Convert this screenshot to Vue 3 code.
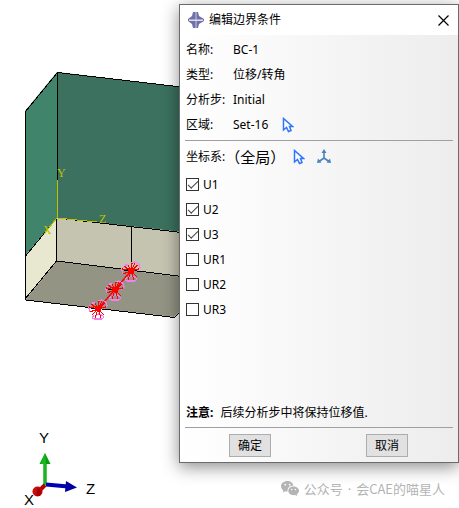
<script setup>
import { reactive } from 'vue'

const fields = [
  { label: '名称:', value: 'BC-1' },
  { label: '类型:', value: '位移/转角' },
  { label: '分析步:', value: 'Initial' },
  { label: '区域:', value: 'Set-16', pick: true },
]

const dofs = reactive([
  { name: 'U1', fixed: true },
  { name: 'U2', fixed: true },
  { name: 'U3', fixed: true },
  { name: 'UR1', fixed: false },
  { name: 'UR2', fixed: false },
  { name: 'UR3', fixed: false },
])

const supports = [
  { x: 131, y: 271 },
  { x: 115, y: 290 },
  { x: 98, y: 309 },
]
</script>

<template>
  <main class="workspace">
    <svg class="viewport" width="459" height="508" viewBox="0 0 459 508" aria-hidden="true">
      <defs>
        <g id="support" fill="none" shape-rendering="crispEdges">
          <path
            d="M-8 -4L-9 -1L-8 3M-6 -6L-3 -6M0 -8L4 -9L8 -7L9 -3L6 0M-4 6L-6 9L-4 10H4L6 8L4 6L1 5L-2 6"
            stroke="#ee82ee"
            stroke-width="1.300"
          />
          <path
            d="M0 0L-9 -2M0 0L-8 3M0 0L-7 -5M0 0L-3 -6M0 0L1 -8M0 0L4 -8M0 0L7 -6M0 0L8 -2M0 0L-6 6M0 0L-3 9M0 0L3 9M0 0L6 6"
            stroke="#ff0000"
            stroke-width="1.200"
          />
          <path d="M-3 -2L0 -3L3 -2V2L0 3L-3 2Z" fill="#ff0000" />
          <path d="M-7 -1H-3" stroke="#000" />
        </g>
      </defs>
      <path d="M25 111L57 72V218L25 256Z" fill="#41846c" />
      <path d="M57 72L190 88V233L57 218Z" fill="#3b715e" />
      <path d="M25 256L57 218V261L25 300Z" fill="#e8e8d1" />
      <path d="M57 218L190 233V278L57 261Z" fill="#c5c4b1" />
      <path d="M57 261L190 278V302L174 317L25 300Z" fill="#949484" />
      <g fill="none" stroke="#000" shape-rendering="crispEdges">
        <path d="M25.500 111.500L57.500 72.500L190 88M25.500 111V300L174.500 317.500L190 302" />
        <path d="M57.500 72V180M57.500 218L190 233.500M25.500 256L57 218M56.500 219V261L190 277.500M56.500 261L25 299M131.500 227V269" />
        <path d="M57.500 180V218L97 222M57 218L44 234" stroke="#c0c000" />
      </g>
      <g class="datum" fill="#c0c000">
        <text x="57" y="177">Y</text>
        <text x="99" y="223">Z</text>
        <text x="43" y="234">X</text>
      </g>
      <path d="M131 271L98 309" stroke="#ff0000" stroke-width="1.500" />
      <use v-for="s in supports" :key="s.x" href="#support" :x="s.x" :y="s.y" />
      <g>
        <path d="M45 485V463" stroke="#18b51c" stroke-width="3.500" />
        <path d="M45 453L50.500 464H39.500Z" fill="#079c0d" />
        <path d="M45 453L46 464H41Z" fill="#19b91d" />
        <path d="M46 484.500L68 486.500" stroke="#0000b5" stroke-width="4" />
        <path d="M66 481L77 487.500L65 492Z" fill="#0000a0" />
        <path d="M45 485L40 490" stroke="#b00000" stroke-width="4" />
        <circle cx="37.500" cy="491.500" r="5" fill="#c80c0c" />
        <path d="M38 487L42 491L40 496L36 496Z" fill="#a80000" />
      </g>
      <g class="triad">
        <text x="39" y="443">Y</text>
        <text x="86" y="494">Z</text>
        <text x="24" y="505">X</text>
      </g>
    </svg>

    <section class="dialog" role="dialog" aria-labelledby="dialog-title">
      <header class="titlebar">
        <svg width="16" height="16" viewBox="0 0 16 16" aria-hidden="true">
          <path d="M5 0H10L11 4L16 7V9L11 12L10 16H5L4 12L0 9V7L4 4Z" fill="#7071a6" />
          <path d="M7 0H9V16H7Z" fill="#9a9bc9" />
          <path d="M1 7.500H15V9H1Z" fill="#dedfef" />
        </svg>
        <h1 id="dialog-title">编辑边界条件</h1>
        <button class="close" type="button" aria-label="关闭">
          <svg width="11" height="11" viewBox="0 0 11 11">
            <path d="M.5 .5L10.500 10.500M10.500 .5L.5 10.500" stroke="#000" stroke-width="1.200" />
          </svg>
        </button>
      </header>

      <div class="content">
        <dl class="fields">
          <div v-for="f in fields" :key="f.label" class="row">
            <dt>{{ f.label }}</dt>
            <dd>{{ f.value }}</dd>
            <button v-if="f.pick" class="tool" type="button" aria-label="编辑区域">
              <svg width="12" height="16" viewBox="0 0 12 16">
                <path d="M1.500 1.500V13L4.500 10.500L6.500 14.500L9 13.500L7.500 9.500H10.500Z" fill="#fff" stroke="#2f74ff" stroke-width="1.500" />
              </svg>
            </button>
          </div>
        </dl>

        <div class="row csys">
          <span>坐标系:</span>
          <span class="global">（全局）</span>
          <button class="tool" type="button" aria-label="选择坐标系">
            <svg width="12" height="16" viewBox="0 0 12 16">
              <path d="M1.500 1.500V13L4.500 10.500L6.500 14.500L9 13.500L7.500 9.500H10.500Z" fill="#fff" stroke="#2f74ff" stroke-width="1.500" />
            </svg>
          </button>
          <button class="tool" type="button" aria-label="创建基准坐标系">
            <svg width="14" height="15" viewBox="0 0 14 15">
              <path d="M7 9V2M7 9L2 12.500M7 9L12 12.500" fill="none" stroke="#4a83b8" stroke-width="1.600" />
              <path d="M7 0L9.500 4H4.500ZM0 14L1 9.500L4.500 13.500ZM14 14L13 9.500L9.500 13.500Z" fill="#4a83b8" />
            </svg>
          </button>
        </div>

        <label v-for="dof in dofs" :key="dof.name" class="row dof">
          <input v-model="dof.fixed" type="checkbox" />
          {{ dof.name }}
        </label>

        <p class="note"><strong>注意:</strong> 后续分析步中将保持位移值.</p>

        <footer class="actions">
          <button type="button">确定</button>
          <button type="button">取消</button>
        </footer>
      </div>
    </section>

    <p class="watermark">
      <svg width="18" height="16" viewBox="0 0 18 16" aria-hidden="true">
        <path d="M6.500 0C2.900 0 0 2.300 0 5.300C0 7 .9 8.500 2.300 9.400L1.700 11.500L4.200 10.300C5 10.500 5.800 10.600 6.700 10.600C5.900 7.300 8.500 4.600 12.500 4.500C12 1.900 9.500 0 6.500 0Z" fill="#b4b4b4" />
        <path d="M12.500 5.500C9.500 5.500 7.300 7.400 7.300 9.800C7.300 12.300 9.600 14.200 12.500 14.200L14.300 13.900L16.300 15L15.800 13.200C17.100 12.400 18 11.200 18 9.800C18 7.400 15.500 5.500 12.500 5.500Z" fill="#b4b4b4" />
        <g fill="#fff">
          <circle cx="4.300" cy="3.700" r=".9" />
          <circle cx="8.700" cy="3.700" r=".9" />
          <circle cx="10.800" cy="8.500" r=".8" />
          <circle cx="14.400" cy="8.500" r=".8" />
        </g>
      </svg>
      <span>公众号</span>
      <span class="dot">·</span>
      <span>会CAE的喵星人</span>
    </p>
  </main>
</template>

<style>
body {
  margin: 0;
  background: #fff;
}
</style>

<style scoped>
.workspace {
  position: relative;
  min-height: 100vh;
  box-sizing: border-box;
  padding: 4px 0 0 179px;
  overflow: hidden;
  color: #000;
  font: 12px/16px 'Noto Sans', 'Noto Sans CJK SC', sans-serif;
}

.viewport {
  position: absolute;
  top: 0;
  left: 0;
}

.datum {
  font: 12px 'Liberation Serif', serif;
}

.triad {
  font: 15px 'Liberation Sans', sans-serif;
}

.dialog {
  position: relative;
  border: 1px solid #6b6b6b;
  box-shadow: 0 4px 16px rgba(0, 0, 0, 0.45);
}

.titlebar {
  display: flex;
  align-items: center;
  height: 30px;
  padding: 0 9px 0 8px;
  background: #fff;
}

h1 {
  flex: 1;
  margin: 0 0 0 5px;
  font-size: 12px;
  font-weight: 400;
}

.close,
.tool {
  display: flex;
  padding: 0;
  border: 0;
  background: none;
}

.content {
  padding: 2px 5px 5px;
  background: linear-gradient(90deg, #fff 0%, #fbfbfb 24%, #f3f3f3 65%, #ededed 100%);
}

.row {
  display: flex;
  align-items: center;
  height: 25px;
  padding-left: 1px;
}

.fields {
  margin: 0;
  padding-bottom: 3px;
  border-bottom: 1px solid #a0a0a0;
}

dt {
  width: 47px;
}

dd {
  margin: 0 14px 0 0;
}

.csys {
  height: 31px;
}

.global {
  margin: 0 8px 0 0;
  font-size: 15px;
}

.csys .tool + .tool {
  margin-left: 12px;
}

.dof {
  gap: 4px;
}

input {
  display: grid;
  place-items: center;
  appearance: none;
  width: 13px;
  height: 13px;
  margin: 0;
  border: 1px solid #333;
  background: #fff;
}

input:checked::before {
  content: '';
  width: 10px;
  height: 5px;
  box-sizing: border-box;
  margin-bottom: 2px;
  border: solid #444;
  border-width: 0 0 1px 1px;
  transform: rotate(-45deg);
}

.note {
  margin: 0;
  padding: 83px 0 6px 1px;
  border-bottom: 1px solid #a0a0a0;
}

.note strong {
  margin-right: 4px;
}

.actions {
  display: flex;
  justify-content: space-between;
  padding: 6px 45px 0 44px;
}

.actions button {
  width: 42px;
  height: 23px;
  padding: 0;
  border: 1px solid #adadad;
  background: #e1e1e1;
  color: #000;
  font: inherit;
}

.watermark {
  position: relative;
  display: flex;
  justify-content: flex-end;
  align-items: center;
  gap: 5px;
  margin: 16px 14px 0 0;
  color: #b4b4b4;
  font: 13px/20px 'Noto Sans CJK SC', sans-serif;
}

.dot {
  font-family: 'Noto Sans', sans-serif;
}
</style>
